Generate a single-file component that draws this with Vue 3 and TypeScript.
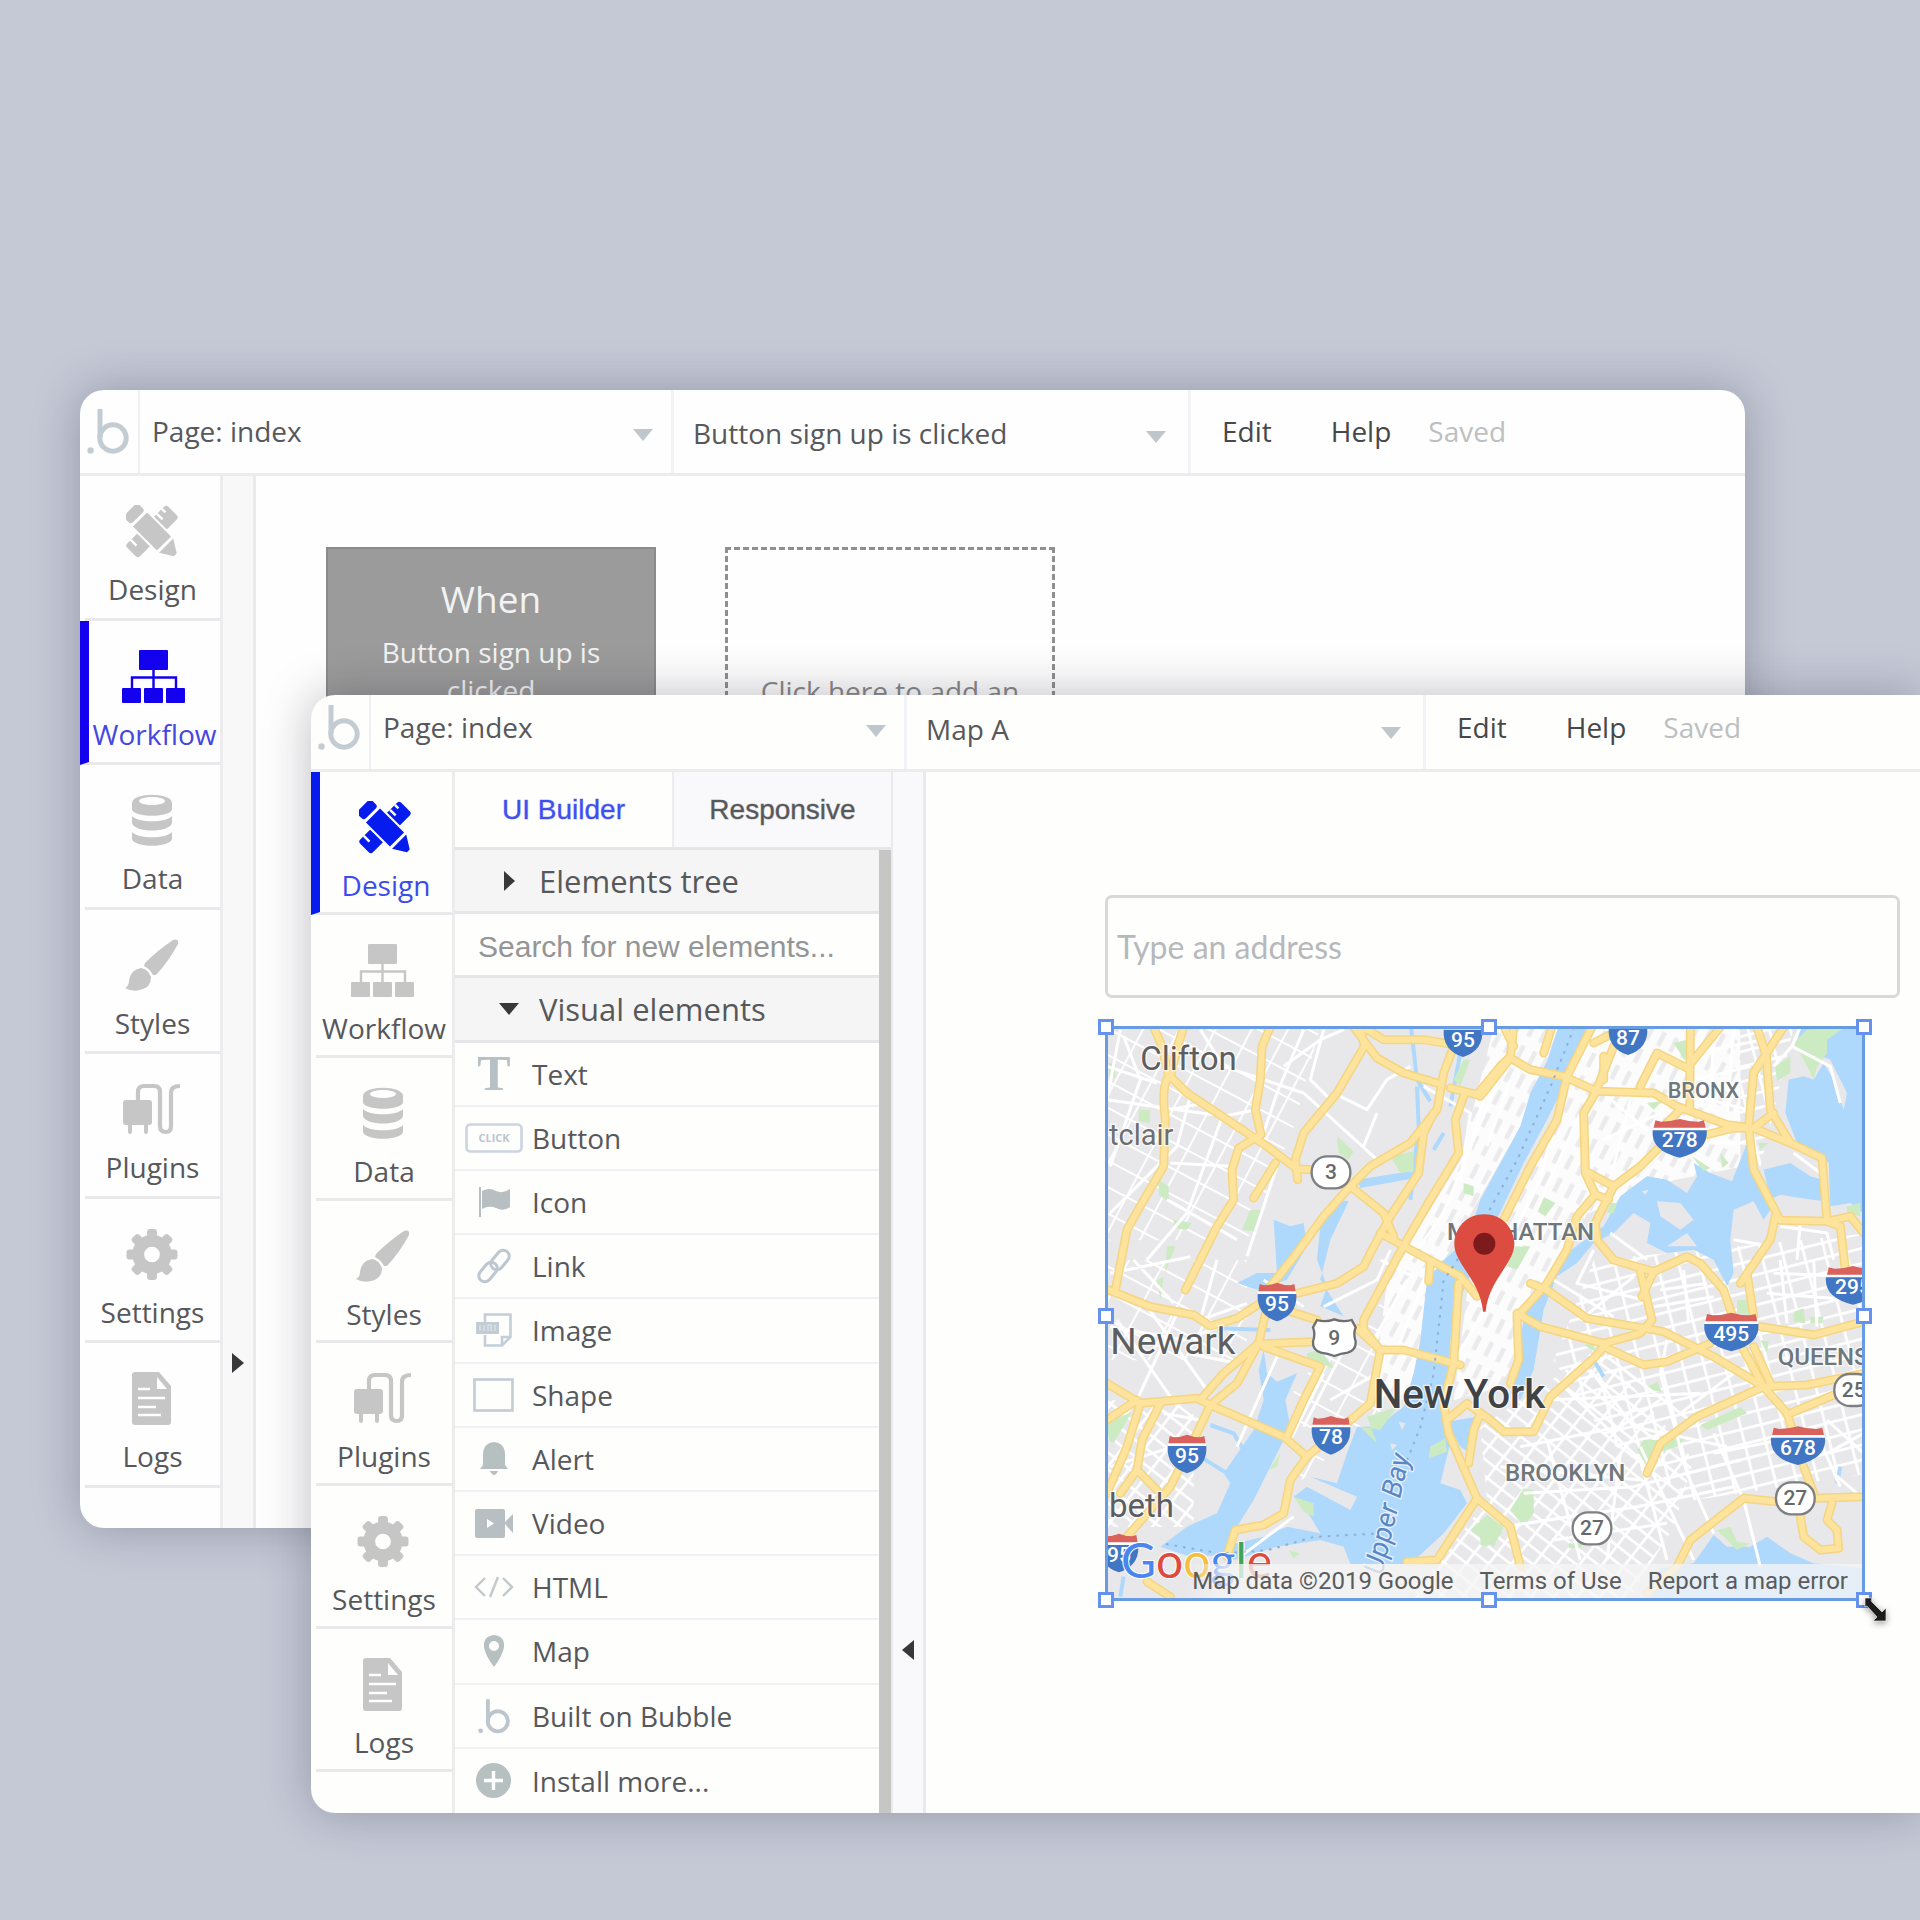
<script setup lang="ts">
import { ref } from 'vue'

type IconName = 'design' | 'workflow' | 'data' | 'styles' | 'plugins' | 'settings' | 'logs'
interface NavItem { label: string; icon: IconName }
interface Shield { x: number; y: number; n: string; wide?: boolean; flat?: boolean }

const navItems: NavItem[] = [
  { label: 'Design', icon: 'design' },
  { label: 'Workflow', icon: 'workflow' },
  { label: 'Data', icon: 'data' },
  { label: 'Styles', icon: 'styles' },
  { label: 'Plugins', icon: 'plugins' },
  { label: 'Settings', icon: 'settings' },
  { label: 'Logs', icon: 'logs' },
]
const elements: string[] = ['Text', 'Button', 'Icon', 'Link', 'Image', 'Shape', 'Alert', 'Video', 'HTML', 'Map', 'Built on Bubble', 'Install more...']
const teeth = [0, 45, 90, 135, 180, 225, 270, 315]
const handles = ['tl', 'tc', 'tr', 'ml', 'mr', 'bl', 'bc', 'br']
const windows = [
  { id: 'back', active: 'Workflow', target: 'Button sign up is clicked' },
  { id: 'front', active: 'Design', target: 'Map A' },
]
const search = ref('')
const address = ref('')

// The map is drawn on four tiles; each tile has its own origin.
const tiles = {
  nw: 'translate(-50 -442)',
  ne: 'translate(1120 -442)',
  sw: 'translate(-50 639)',
  se: 'translate(1120 639)',
}
type Tile = keyof typeof tiles
interface Shape { t: Tile; d: string }

const water: Shape[] = [
  { t: 'nw', d: 'M1405,438 L1370,545 L1320,640 L1290,740 L1230,850 L1170,960 L1130,1080 L1060,1141 L1010,1201 L990,1381 L970,1481 L940,1581 L860,1641 L800,1641 L770,1721 L740,1811 L660,1791 L800,1851 L780,1891 L650,1821 L610,1851 L660,1911 L690,1961 L590,1941 L520,1971 L400,2000 L430,2041 L560,2001 L690,1981 L760,2001 L780,2053 L960,2053 L1060,1961 L1130,1871 L1110,1831 L1050,1811 L1080,1690 L1060,1601 L1075,1481 L1080,1381 L1120,1231 L1180,1101 L1300,850 L1370,720 L1430,600 L1495,438Z' },
  { t: 'sw', d: 'M520,330 L505,390 L520,480 L490,570 L400,700 L420,730 L380,820 L290,860 L210,920 L300,950 L410,945 L440,860 L490,780 L550,660 L600,560 L585,480 L620,400 L560,425 L530,400Z' },
  { t: 'nw', d: 'M745,960 L690,1040 L680,1140 L710,1220 L690,1280 L760,1310 L690,1200 L720,1080 L775,965Z M550,1020 L600,1040 L640,1030 L650,1100 L590,1200 L500,1230 L440,1210 L500,1180 L560,1180Z M800,900 L960,875 L975,895 L810,925Z' },
  { t: 'ne', d: 'M960,438 L1160,438 L1160,1010 L1110,970 L1050,980 L1045,850 L950,790 L915,700 L925,600 L970,590 L1000,600 L1030,550 L1060,600 L1090,690 L1100,640 L1050,540 L950,500Z' },
  { t: 'ne', d: 'M850,870 L930,850 L990,890 L1025,900 L1030,965 L960,955 L900,945 L870,960Z' },
  { t: 'ne', d: 'M640,850 L690,880 L755,905 L800,790 L830,900 L870,990 L850,1020 L820,965 L760,990 L750,1080 L760,1180 L740,1220 L700,1140 L640,1110 L560,1120 L500,1090 L510,1030 L460,1000 L400,1060 L340,1090 L290,1150 L230,1190 L190,1290 L160,1470 L120,1560 L90,1540 L120,1400 L130,1300 L200,1220 L260,1120 L370,1040 L420,950 L500,890 L560,900 L620,940 L650,890Z' },
  { t: 'se', d: 'M700,885 L740,920 L810,920 L860,890 L930,940 L1000,970 L1160,985 L1160,1090 L490,1090 L540,985 L640,970Z' },
  { t: 'sw', d: 'M1070,545 L1160,530 L1140,640 L1110,620Z' },
]
const creeks: Shape[] = [
  { t: 'nw', d: 'M962,442 L980,600 L1020,665 M980,620 L985,740 L960,960 M1110,520 L1080,680 M1060,760 L1030,810' },
  { t: 'sw', d: 'M360,555 L430,580 L460,630 M330,650 L410,700 M380,265 L540,270 M100,1010 L90,1070' },
  { t: 'se', d: 'M340,360 L370,410 M1080,680 L1070,730' },
]
const islands: Shape[] = [
  { t: 'ne', d: 'M530,965 L600,970 L640,1020 L600,1050 L540,1010Z M560,1100 L620,1060 L650,1100Z M485,935 L505,930 L495,945Z' },
  { t: 'sw', d: 'M645,30 L680,80 L665,120 L640,70Z M925,545 L945,550 L935,570Z M900,610 L920,615 L905,630Z' },
]
const parks: Shape[] = [
  { t: 'nw', d: 'M55,550 L75,550 L75,595 L55,590Z M145,690 L180,690 L178,730 L145,725Z M205,900 L235,920 L235,965 L205,945Z M740,770 L790,815 L775,840 L745,820Z M900,830 L970,815 L970,875 L930,880Z M480,990 L515,990 L490,1055 L455,1050Z M250,1020 L305,1030 L290,1050 L250,1045Z M1120,540 L1140,540 L1110,620 L1090,600Z M1120,910 L1150,920 L1150,950 L1120,940Z M230,1100 L255,1100 L225,1180Z' },
  { t: 'ne', d: 'M940,490 L980,450 L1090,445 L1040,480 L1040,520 L1010,560 L1000,600 L970,540Z M885,560 L930,530 L930,580 L890,605Z M580,490 L620,480 L615,545Z M185,950 L225,970 L195,1010 L165,990Z M500,670 L545,665 L520,690Z M635,830 L690,865 L670,875Z M720,820 L745,850 L725,865Z M1100,980 L1140,970 L1140,1010 L1100,1000Z M105,1100 L150,1100 L110,1170 L80,1160Z M835,790 L865,790 L840,810Z M390,970 L410,970 L400,1000 L380,1000Z' },
  { t: 'sw', d: 'M830,530 L920,500 L870,570 L810,560 L860,610Z M1020,620 L1065,595 L1070,635 L1015,655Z M610,770 L670,790 L670,830 L640,815Z M50,550 L125,515 L70,610 L55,600Z M650,340 L690,330 L735,390 L650,350Z M535,690 L570,640 L560,680Z M1140,870 L1190,825 L1240,860 L1210,920Z M595,930 L630,940 L610,955Z M200,120 L220,110 L210,180Z' },
  { t: 'se', d: 'M470,630 L490,600 L540,600 L620,590 L590,620 L530,640 L500,680Z M660,555 L780,500 L800,520 L680,570Z M770,180 L800,180 L805,225 L770,220Z M940,215 L970,205 L975,250 L940,245Z M990,230 L1030,230 L1025,250 L990,250Z M500,440 L530,425 L545,455 L505,450Z M90,810 L130,745 L160,750 L160,820 L130,860Z M0,840 L30,835 L65,880 L20,920 L0,915Z M710,870 L750,860 L770,905 L810,910 L770,930Z M840,300 L865,305 L860,340Z M310,315 L340,310 L345,335Z M265,910 L310,910 L300,925 L265,925Z' },
]
const minor: Shape[] = [
  { t: 'nw', d: 'M50,560 L200,610 M90,450 L50,660 M100,470 L150,600 L60,860 M330,450 L400,560 L640,640 L860,840 M640,450 L560,640 L520,760 M580,560 L690,480 L760,450 M50,660 L400,710 L500,690 M300,650 L260,800 L60,1000 M240,690 L340,670 M400,700 L290,1000 L170,1140 M240,850 L420,860 M230,960 L440,1080 M750,650 L830,690 L890,600 L960,560 M860,700 L820,800 M560,860 L470,1130 M1000,620 L1140,700 L1110,900 M700,450 L660,600 L720,660 M1240,560 L1060,1000 L960,1140' },
  { t: 'ne', d: 'M960,442 L935,500 L880,560 M935,500 L1050,560 L1080,670 M380,650 L560,800 M450,660 L400,860 M370,780 L540,700 M650,600 L810,560 M650,650 L800,690 M700,450 L690,690 M760,450 L740,710 M640,520 L850,480 M690,790 L800,790 M250,610 L180,900 L60,1140 M300,700 L120,1100 M940,820 L1020,880 M900,1040 L1040,1060 L1060,1140 M960,1030 L950,1140 M760,1080 L870,1100 M390,1060 L500,1140 M40,560 L-60,900 M90,600 L20,800' },
  { t: 'sw', d: 'M60,260 L280,300 L470,230 M80,240 L240,470 M170,200 L350,450 M260,220 L140,480 M380,60 L330,240 L470,190 M130,60 L250,190 M60,100 L300,50 M290,340 L440,370 M520,120 L640,200 M700,200 L860,120 L900,30 M560,350 L440,620 M220,520 L330,540 L300,640 M60,680 L250,620 M610,830 L450,950 M700,400 L600,600 M760,330 L640,560 M860,400 L720,480 M950,120 L850,300 M1010,100 L920,330 M1200,180 L1100,350 M870,60 L970,110' },
  { t: 'se', d: 'M610,90 L625,250 M540,150 L680,130 M520,200 L700,170 M340,30 L290,130 L490,180 M220,120 L400,230 M300,240 L460,110 M560,300 L540,400 L620,700 L700,880 M200,480 L660,460 M250,440 L480,660 L560,960 M330,390 L460,560 L740,620 M380,350 L640,550 M120,620 L420,560 L540,480 M200,600 L300,960 M60,680 L480,720 M130,760 L460,740 L780,660 M70,860 L470,800 L760,740 M220,900 L560,850 M700,580 L790,780 L840,980 M880,100 L1150,110 M860,160 L1130,180 M900,60 L920,250 M1000,60 L1010,260 M600,520 L760,400 M700,640 L900,600 M1040,540 L1150,640 M1040,640 L1150,580 M1060,700 L1130,760 M1000,560 L1080,740 M420,640 L380,960 M480,620 L640,960' },
]
const roads: Shape[] = [
  { t: 'nw', d: 'M190,442 L215,500 L235,590 Q212,620 225,720 L220,860 L155,970 L110,1050 L75,1231' },
  { t: 'nw', d: 'M280,442 L262,500 L240,590 L290,640 L440,740 L530,800 L620,868 L670,870' },
  { t: 'nw', d: 'M540,442 L515,500 L510,600 L495,690 L512,765 L445,805 L425,870 L430,960 L380,1040 L340,1120 L285,1231' },
  { t: 'nw', d: 'M810,442 L822,500 L740,640 L640,760 L615,840 L622,900' },
  { t: 'nw', d: 'M790,442 L860,535 L940,580 L1040,610 M830,450 L880,480 L1000,480 L1090,495' },
  { t: 'nw', d: 'M1090,500 L1060,580 L1040,690 L960,790 L840,860 L780,920 L700,1010 L620,1120 L540,1220' },
  { t: 'nw', d: 'M1030,700 L1000,760 L985,880 L900,1010 L840,1120 L820,1161 L740,1211 L620,1241' },
  { t: 'nw', d: 'M780,920 L880,1000 L910,1070 M870,1060 L960,1110 L1110,1190 L1160,1250 M1020,1150 L1015,1205' },
  { t: 'nw', d: 'M1080,625 L1160,645 L1230,560 L1260,530 M1120,650 L1095,720 L1105,820 L1020,960 L950,1080 L820,1320 L820,1350 L870,1411' },
  { t: 'nw', d: 'M555,850 L490,955' },
  { t: 'sw', d: 'M55,150 L180,200 L310,225 L360,258 L440,235 L510,190' },
  { t: 'sw', d: 'M530,200 L505,310 L400,400 L330,480 M505,310 L440,430 L360,495' },
  { t: 'sw', d: 'M50,430 L150,490 L320,475 L360,495 L580,590 L650,650 L840,490 L870,330' },
  { t: 'sw', d: 'M500,312 L670,305 M520,320 L690,380 L640,480 L590,590' },
  { t: 'sw', d: 'M360,495 L310,600 L240,740 L110,890 M210,490 L155,600 L140,690 L200,750 M150,490 L110,620 L50,760 M140,690 L90,760 M50,540 L140,480' },
  { t: 'sw', d: 'M650,650 L600,720 L580,820 L520,855 L435,870 L410,950' },
  { t: 'sw', d: 'M800,265 L870,330 L940,330 L1110,375 M600,215 L680,240' },
  { t: 'sw', d: 'M1105,130 L1090,370 L1060,490 L1075,580 L1160,775 L1040,960 L950,965 M1160,775 L1260,860 L1290,980' },
  { t: 'sw', d: 'M1170,520 L1150,570 L1135,670 M1070,540 L1130,490 L1200,540 L1240,575 L1330,575 L1380,470 L1510,355 L1540,320' },
  { t: 'sw', d: 'M170,1025 L240,1070' },
  { t: 'ne', d: 'M100,442 L90,535 L150,570 L250,590 L350,635 L520,640 L590,680 L740,735 L820,745 L930,790 L1025,835 L1040,1025 L900,1022 L820,870 L805,740 L820,580 L910,442' },
  { t: 'ne', d: 'M335,442 L260,590 L230,720 L150,860 L70,1020' },
  { t: 'ne', d: 'M400,500 L345,640 L310,700 L315,880 L345,945 L385,960 M370,530 L370,600 M340,490 L400,460' },
  { t: 'ne', d: 'M215,442 L190,520 M90,535 L0,650 M75,450 L100,500' },
  { t: 'ne', d: 'M630,442 L628,690 M720,442 L620,565 L530,520 L480,620 M600,690 L560,730' },
  { t: 'ne', d: 'M830,442 L858,530 L870,690 L930,790 M680,765 L760,745 L820,745 L880,700' },
  { t: 'ne', d: 'M540,800 L480,860 L400,920 L345,1030 L350,1081 L400,1141 L520,1176 L620,1131 L660,1151 L730,1231 L760,1320 M325,880 L400,920' },
  { t: 'ne', d: 'M345,945 L290,1010 L260,1110 L200,1211 L110,1311 L115,1440 L90,1510' },
  { t: 'ne', d: 'M885,1010 L870,1080 L780,1211 M800,1181 L820,1310 M1040,1025 L1080,1040 L1095,1170 M1040,1025 L1110,1010 L1150,1060' },
  { t: 'se', d: 'M150,130 L200,150 L320,235 L550,275 L700,350 L850,440 M520,95 L485,170' },
  { t: 'se', d: 'M110,220 L180,260 L370,310 L480,280 L515,240 L480,95' },
  { t: 'se', d: 'M370,320 L490,375 L560,365 L690,310' },
  { t: 'se', d: 'M790,330 L850,440 L920,520 L940,580 M820,320 L870,430' },
  { t: 'se', d: 'M840,260 L1000,285 L1150,245 M850,440 L980,435 L1150,400 M930,520 L1060,465' },
  { t: 'se', d: 'M850,440 L650,530 L540,610 L500,700' },
  { t: 'se', d: 'M970,680 L1000,760 M500,1060 L590,980 L630,900 L790,775 L890,785 M1000,775 L1150,770 M960,830 L970,890 L1020,930 L1075,925 L1070,870 L1040,840 L1055,790' },
]
const interstates: Shield[] = [
  { x: 1068, y: 36, n: '95', flat: true },
  { x: 1563, y: 30, n: '87', flat: true },
  { x: 1718, y: 338, n: '278', wide: true },
  { x: 510, y: 829, n: '95' },
  { x: 672, y: 1229, n: '78' },
  { x: 240, y: 1285, n: '95' },
  { x: 36, y: 1582, n: '95' },
  { x: 2238, y: 779, n: '295', wide: true },
  { x: 1873, y: 919, n: '495', wide: true },
  { x: 2073, y: 1260, n: '678', wide: true },
]
const routes: Shield[] = [
  { x: 672, y: 436, n: '3' },
  { x: 2065, y: 1414, n: '27' },
  { x: 1455, y: 1504, n: '27' },
  { x: 2240, y: 1089, n: '25' },
]
</script>

<template>
  <main class="stage">
    <section v-for="w in windows" :key="w.id" class="window" :class="w.id">
      <header class="topbar">
        <a class="logo" href="#" aria-label="Bubble">
          <svg width="42" height="46" viewBox="0 0 42 46">
            <circle cx="3.5" cy="42.5" r="3.2" fill="#c3ccd3" />
            <path d="M13 1V30" stroke="#c3ccd3" stroke-width="5" fill="none" />
            <circle cx="26" cy="30" r="13.2" stroke="#c3ccd3" stroke-width="5" fill="none" />
          </svg>
        </a>
        <div class="picker page-picker">
          <select :aria-label="w.id + ' page'"><option>Page: index</option></select>
          <svg class="caret" width="20" height="12" viewBox="0 0 20 12"><path d="M0 0H20L10 12Z" fill="#bfc7cd" /></svg>
        </div>
        <div class="picker target-picker">
          <select :aria-label="w.id + ' selection'"><option>{{ w.target }}</option></select>
          <svg class="caret" width="20" height="12" viewBox="0 0 20 12"><path d="M0 0H20L10 12Z" fill="#bfc7cd" /></svg>
        </div>
        <div class="menu">
          <button type="button" class="edit">Edit</button>
          <button type="button" class="help">Help</button>
          <span class="saved">Saved</span>
        </div>
      </header>

      <div class="body">
        <nav class="side">
          <div class="side-grid">
            <a v-for="item in navItems" :key="item.label" href="#" class="side-item" :class="{ active: item.label === w.active }">
              <svg v-if="item.icon === 'design'" class="ico" width="52" height="53" viewBox="0 0 52 52" fill="currentColor">
                <g transform="rotate(-45 26 26)">
                  <rect x="-3" y="17" width="58" height="18" rx="3" />
                  <path d="M5 17V25M42 17V25M49 17V22" stroke="#fff" stroke-width="2.5" />
                </g>
                <g transform="rotate(45 26 26)">
                  <rect x="4" y="14" width="40" height="24" fill="#fff" />
                  <rect x="-5" y="16" width="11" height="20" rx="3" />
                  <rect x="9" y="16" width="34" height="20" />
                  <path d="M46 16L59 24V28L46 36Z" />
                </g>
              </svg>
              <svg v-else-if="item.icon === 'workflow'" class="ico" width="64" height="53" viewBox="0 0 64 53" fill="currentColor">
                <rect x="17" y="0" width="29" height="20" rx="1" />
                <path d="M31.500 20V38M10 38V27.500H54V38" fill="none" stroke="currentColor" stroke-width="2.400" />
                <rect x="0" y="38" width="19" height="15" rx="1" /><rect x="22" y="38" width="19" height="15" rx="1" /><rect x="44" y="38" width="19" height="15" rx="1" />
              </svg>
              <svg v-else-if="item.icon === 'data'" class="ico" width="40" height="53" viewBox="0 0 40 53" fill="currentColor">
                <path d="M0 9C0-2 40-2 40 9V15C40 24 0 24 0 15Z" />
                <ellipse cx="20" cy="7" rx="13" ry="4" fill="#fff" />
                <path d="M0 22C6 29 34 29 40 22V29C38 39 2 39 0 29Z" />
                <path d="M0 38C6 45 34 45 40 38V45C38 54 2 54 0 45Z" />
              </svg>
              <svg v-else-if="item.icon === 'styles'" class="ico" width="54" height="53" viewBox="0 0 54 53" fill="currentColor">
                <path d="M48 1Q54-1 53 5Q44 22 31 36L28 36Q25 30 19 27L20 24Q33 11 48 1Z" />
                <path d="M16 29Q23 30 26 38Q26 49 15 51Q7 53 0 49Q4 47 4 42Q5 31 16 29Z" />
              </svg>
              <svg v-else-if="item.icon === 'plugins'" class="ico" width="58" height="53" viewBox="0 0 58 53" fill="currentColor">
                <rect x="0" y="17" width="29" height="25" rx="3" />
                <path d="M7 40V49M23 40V49" stroke="currentColor" stroke-width="4" stroke-linecap="round" />
                <path d="M15 18V9Q15 3 21 3H31Q37 3 37 9V43Q37 49 43 49Q48 49 48 43V10Q48 3 57 3" fill="none" stroke="currentColor" stroke-width="4.200" />
              </svg>
              <svg v-else-if="item.icon === 'settings'" class="ico" width="54" height="53" viewBox="-27 -27 54 54" fill="currentColor">
                <circle r="14" fill="none" stroke="currentColor" stroke-width="12" />
                <rect v-for="a in teeth" :key="a" x="-5" y="-26" width="10" height="12" rx="3" :transform="`rotate(${a})`" />
              </svg>
              <svg v-else class="ico" width="40" height="53" viewBox="0 0 40 53" fill="currentColor">
                <path d="M3 0H27L39 14V50Q39 53 36 53H3Q0 53 0 50V3Q0 0 3 0Z" />
                <path d="M25 5L35 17H25Z" fill="#fff" />
                <path d="M6 17H18M6 26H33M6 35H24M6 43H29" stroke="#fff" stroke-width="2.600" />
              </svg>
              <span>{{ item.label }}</span>
            </a>
          </div>
        </nav>

        <template v-if="w.id === 'back'">
          <div class="strip">
            <button type="button" class="fold" aria-label="Expand"><svg width="12" height="20" viewBox="0 0 12 20"><path d="M0 0L12 10L0 20Z" fill="#38383a" /></svg></button>
          </div>
          <div class="flow">
            <article class="when">
              <h2>When</h2>
              <p>Button sign up is clicked</p>
            </article>
            <button type="button" class="add">Click here to add an</button>
          </div>
        </template>

        <template v-else>
          <aside class="panel">
            <div class="tabs">
              <button type="button" class="tab on">UI Builder</button>
              <button type="button" class="tab">Responsive</button>
            </div>
            <div class="scroller">
              <div class="rows">
                <button type="button" class="row group">
                  <span class="arrow"><svg width="12" height="20" viewBox="0 0 12 20"><path d="M1 0L12 10L1 20Z" fill="#38383a" /></svg></span>Elements tree
                </button>
                <input v-model="search" class="row search" type="text" placeholder="Search for new elements..." aria-label="Search for new elements">
                <button type="button" class="row group">
                  <span class="arrow"><svg width="20" height="12" viewBox="0 0 20 12"><path d="M0 0H20L10 12Z" fill="#38383a" /></svg></span>Visual elements
                </button>
                <button v-for="el in elements" :key="el" type="button" class="row">
                  <span class="glyph">
                    <svg v-if="el === 'Text'" width="34" height="36" viewBox="0 0 34 36"><text x="17" y="34" text-anchor="middle" font-family="Liberation Serif, serif" font-weight="700" font-size="50" fill="#b7c0c5">T</text></svg>
                    <svg v-else-if="el === 'Button'" width="58" height="30" viewBox="0 0 58 30"><rect x="1.500" y="1.500" width="55" height="27" rx="4" fill="none" stroke="#ccd4e0" stroke-width="2.600" /><text x="29" y="19" text-anchor="middle" font-family="Open Sans, sans-serif" font-weight="700" font-size="11" fill="#bcc5cd">CLICK</text></svg>
                    <svg v-else-if="el === 'Icon'" width="32" height="30" viewBox="0 0 32 30" fill="#b7bfc2"><path d="M1 0H3V30H1Z" /><path d="M4 4Q11 0 18 4Q25 7 32 2V20Q25 25 18 21Q11 18 4 22Z" /></svg>
                    <svg v-else-if="el === 'Link'" width="34" height="36" viewBox="0 0 34 36" fill="none" stroke="#bcc7cf" stroke-width="3"><rect x="-11" y="-6" width="22" height="12" rx="6" transform="translate(11 24) rotate(-50)" /><rect x="-11" y="-6" width="22" height="12" rx="6" transform="translate(23 12) rotate(-50)" /></svg>
                    <svg v-else-if="el === 'Image'" width="36" height="34" viewBox="0 0 36 34"><path d="M9 9V1.500H34.500V24L26 32.500H9V22M26 32V24H34" fill="none" stroke="#c3ced8" stroke-width="2.600" /><rect x="0" y="9" width="23" height="12" fill="#c3ccd4" /><path d="M4 12V18M8 12V18M12 18V12H15V18M19 12V18" stroke="#d8dfe4" stroke-width="1.500" fill="none" /></svg>
                    <svg v-else-if="el === 'Shape'" width="41" height="34" viewBox="0 0 41 34"><rect x="1.500" y="1.500" width="38" height="31" fill="none" stroke="#c3ccd3" stroke-width="2.600" /></svg>
                    <svg v-else-if="el === 'Alert'" width="28" height="33" viewBox="0 0 28 33" fill="#b7c0c1"><path d="M14 0Q25 1 25 13V23L28 27H0L3 23V13Q3 1 14 0Z" /><path d="M10 29H18Q16 33 14 33Q12 33 10 29Z" /></svg>
                    <svg v-else-if="el === 'Video'" width="38" height="29" viewBox="0 0 38 29" fill="#b7bfc2"><rect width="30" height="29" rx="2" /><path d="M29 14L38 5V24Z" /><path d="M12 10L19 14.500L12 19Z" fill="#fff" /></svg>
                    <svg v-else-if="el === 'HTML'" width="40" height="22" viewBox="0 0 40 22" fill="none" stroke="#c3c8cc" stroke-width="2.400"><path d="M11 2L2 11L11 20M29 2L38 11L29 20M24 1L16 21" /></svg>
                    <svg v-else-if="el === 'Map'" width="22" height="32" viewBox="0 0 22 32"><path fill-rule="evenodd" d="M11 0Q22 1 21 12Q20 20 11 32Q2 20 1 12Q0 1 11 0ZM11 6A5 5 0 1 0 11 16A5 5 0 1 0 11 6Z" fill="#b7c0c1" /></svg>
                    <svg v-else-if="el === 'Built on Bubble'" width="32" height="36" viewBox="0 0 42 46"><circle cx="3.500" cy="42.500" r="3.200" fill="#bcc6cc" /><path d="M13 1V30" stroke="#bcc6cc" stroke-width="5" /><circle cx="26" cy="30" r="13.200" stroke="#bcc6cc" stroke-width="5" fill="none" /></svg>
                    <svg v-else width="35" height="35" viewBox="0 0 35 35"><circle cx="17.500" cy="17.500" r="17.500" fill="#b7c0c1" /><path d="M17.500 8V27M8 17.500H27" stroke="#fff" stroke-width="3.400" /></svg>
                  </span>{{ el }}
                </button>
              </div>
              <div class="thumb"></div>
            </div>
          </aside>
          <div class="strip">
            <button type="button" class="fold" aria-label="Collapse"><svg width="12" height="20" viewBox="0 0 12 20"><path d="M12 0L0 10L12 20Z" fill="#38383a" /></svg></button>
          </div>
          <div class="canvas">
            <input v-model="address" class="address" type="text" placeholder="Type an address" aria-label="Address">
            <div class="map">
              <svg class="map-art" viewBox="-6 -3 2280 1725" preserveAspectRatio="xMidYMid slice" role="img" aria-label="Map of New York">
                <defs>
                  <pattern id="gridA" width="96" height="70" patternUnits="userSpaceOnUse" patternTransform="rotate(28)"><path d="M0 0H96M0 0V70" stroke="#fff" stroke-width="11" /></pattern>
                  <pattern id="gridB" width="40" height="76" patternUnits="userSpaceOnUse" patternTransform="rotate(27)"><rect width="40" height="76" fill="#fcfcfc" /><rect x="12" y="14" width="14" height="46" fill="#ebebee" /></pattern>
                  <pattern id="gridC" width="62" height="44" patternUnits="userSpaceOnUse" patternTransform="rotate(-14)"><path d="M0 0H62M0 0V44" stroke="#fff" stroke-width="16" /></pattern>
                  <pattern id="gridD" width="54" height="40" patternUnits="userSpaceOnUse" patternTransform="rotate(38)"><path d="M0 0H54M0 0V40" stroke="#fff" stroke-width="16" /></pattern>
                </defs>
                <rect x="-6" y="-3" width="2280" height="1725" fill="#e8e8eb" />
                <path d="M0 0H640L560 300L420 640H0Z M60 700H420V1000H0V700Z M560 1080L740 900L900 760L880 1100L560 1380Z" fill="url(#gridA)" />
                <path d="M1160 0H1360L1240 300L1000 720L900 1120L800 1100L840 760L1060 400Z M1440 0H1900V420L1700 460L1440 560L1340 760L1180 1080L1040 1120L1080 800L1300 380Z" fill="url(#gridB)" />
                <path d="M1900 0H2060L1960 420L1900 340Z M1460 700L2280 620V1340L1760 1420L1500 1240L1340 1000Z" fill="url(#gridC)" />
                <path d="M1120 1200L1480 960L1760 1300L1700 1500L1560 1725H900L1140 1420Z M-6 1120H260V1500H-6Z" fill="url(#gridD)" />
                <g fill="#aed8fc"><path v-for="(s, i) in water" :key="i" :d="s.d" :transform="tiles[s.t]" /></g>
                <g fill="none" stroke="#aed8fc" stroke-width="12"><path v-for="(s, i) in creeks" :key="i" :d="s.d" :transform="tiles[s.t]" /></g>
                <g fill="#e8e8eb"><path v-for="(s, i) in islands" :key="i" :d="s.d" :transform="tiles[s.t]" /></g>
                <g fill="#cdebc2"><path v-for="(s, i) in parks" :key="i" :d="s.d" :transform="tiles[s.t]" /></g>
                <g fill="none" stroke="#fff" stroke-width="9" stroke-linejoin="round"><path v-for="(s, i) in minor" :key="i" :d="s.d" :transform="tiles[s.t]" /></g>
                <g fill="none" stroke="#f4d582" stroke-width="27" stroke-linejoin="round" stroke-linecap="round"><path v-for="(s, i) in roads" :key="i" :d="s.d" :transform="tiles[s.t]" /></g>
                <g fill="none" stroke="#fde39b" stroke-width="18" stroke-linejoin="round" stroke-linecap="round"><path v-for="(s, i) in roads" :key="i" :d="s.d" :transform="tiles[s.t]" /></g>
                <path d="M1402 0L1330 180L1230 400L1130 580L1010 760L980 1040L940 1200L900 1300M800 1520L620 1530L480 1570L340 1580L170 1550" fill="none" stroke="#8fb0d4" stroke-width="6" stroke-dasharray="8 18" />

                <g v-for="(s, i) in interstates" :key="'i' + i" :transform="`translate(${s.x} ${s.y})`">
                  <g :transform="s.wide ? 'scale(1.4 1)' : undefined">
                    <path v-if="!s.flat" d="M-52-58L-40-54Q-20-54 0-62Q20-54 40-54L52-58L56-34H-56Z" fill="#d9625c" />
                    <path d="M-57-36H57V-28H-57Z" fill="#fff" />
                    <path d="M-58-28H58Q62 34 0 54Q-62 34-58-28Z" fill="#4076c4" />
                  </g>
                  <text y="23" text-anchor="middle" class="num">{{ s.n }}</text>
                </g>
                <g v-for="(s, i) in routes" :key="'r' + i" :transform="`translate(${s.x} ${s.y})`">
                  <rect x="-58" y="-48" width="116" height="96" rx="46" fill="#fff" stroke="#7d7f82" stroke-width="7" />
                  <text y="20" text-anchor="middle" class="num dark">{{ s.n }}</text>
                </g>
                <g transform="translate(682 931)">
                  <path d="M-52-52Q-26-44 0-54Q26-44 52-52L64-30Q56-10 64 12Q66 38 40 46Q20 48 0 56Q-20 48-40 46Q-66 38-64 12Q-56-10-64-30Z" fill="#fff" stroke="#6d6f72" stroke-width="7" />
                  <text y="22" text-anchor="middle" class="num dark">9</text>
                </g>

                <g class="place">
                  <text x="100" y="129" font-size="99">Clifton</text>
                  <text x="6" y="353" font-size="87" fill="#6c6e70">tclair</text>
                  <text x="10" y="982" font-size="111">Newark</text>
                  <text x="6" y="1469" font-size="99">beth</text>
                  <text x="800" y="1144" font-size="121" font-weight="500" fill="#404244">New York</text>
                  <g font-size="72" font-weight="500" fill="#6f767c">
                    <text x="1020" y="638">MANHATTAN</text>
                    <text x="1682" y="213" font-size="65">BRONX</text>
                    <text x="2012" y="1014">QUEENS</text>
                    <text x="1194" y="1361">BROOKLYN</text>
                  </g>
                  <text transform="translate(826 1646) rotate(-77)" font-size="84" font-style="italic" fill="#5c87c6">Upper Bay</text>
                </g>
                <text x="42" y="1652" font-family="Lato, sans-serif" font-size="144" stroke="#fff" stroke-width="6" paint-order="stroke"><tspan fill="#4a86ee">G</tspan><tspan fill="#dc4b3e">o</tspan><tspan fill="#f4bd3c">o</tspan><tspan fill="#4a86ee">g</tspan><tspan fill="#3fa45b">l</tspan><tspan fill="#dc4b3e">e</tspan></text>
                <path d="M1132 562C1184 562 1222 602 1222 652C1222 710 1144 760 1136 854H1128C1120 760 1042 710 1042 652C1042 602 1080 562 1132 562Z" fill="#dc4c40" />
                <circle cx="1132" cy="650" r="33" fill="#7c1a1c" />
              </svg>
              <footer class="legal">
                <span>Map data ©2019 Google</span>
                <a href="#">Terms of Use</a>
                <a href="#">Report a map error</a>
              </footer>
              <i v-for="h in handles" :key="h" class="handle" :class="h"></i>
              <svg class="cursor" width="28" height="28" viewBox="0 0 28 28"><path d="M2 2H9L8 5L19 16L23 12V25H10L14 21L4 10L2 11Z" fill="#1c1c1c" stroke="#fff" stroke-opacity=".6" stroke-width="1" /></svg>
            </div>
          </div>
        </template>
      </div>
    </section>
  </main>
</template>

<style>
body { margin: 0; background: #c5c9d6; }
</style>

<style scoped>
.stage {
  position: relative;
  min-height: 1920px;
  overflow: hidden;
  background: #c5c9d6;
  font-family: 'Open Sans', 'Noto Sans', sans-serif;
  font-size: 28px;
  line-height: 38px;
  color: #56585b;
}
.stage * { box-sizing: border-box; }
button, select, input { font: inherit; color: inherit; background: none; border: 0; padding: 0; margin: 0; border-radius: 0; }
a { color: inherit; text-decoration: none; }
svg { display: block; flex: none; }

.window {
  position: absolute;
  display: flex;
  flex-direction: column;
  border-radius: 24px;
  overflow: hidden;
  background: #fefefe;
  box-shadow: 0 0 48px rgba(20, 20, 40, 0.28);
}
.back { top: 390px; left: 80px; right: 175px; }
.front { top: 695px; left: 311px; right: 0; border-radius: 24px 0 0 24px; background: #fefefd; }

.topbar { display: flex; height: 86px; border-bottom: 3px solid #ececec; }
.front .topbar { height: 77px; }
.topbar > * { display: flex; align-items: center; padding-bottom: 2px; }
.front .topbar > * { padding-bottom: 10px; }
.logo { width: 60px; padding-left: 7px; border-right: 2px solid #eff0f4; }
.picker { position: relative; border-right: 3px solid #f2f3f6; }
.page-picker { width: 534px; }
.target-picker { width: 517px; padding-top: 4px; }
.front .page-picker { width: 536px; }
.front .target-picker { width: 519px; }
.picker select { appearance: none; flex: 1; height: 40px; padding-left: 12px; }
.target-picker select { padding-left: 19px; }
.picker .caret { margin: 8px 18px 0 0; }
.target-picker .caret { margin-right: 22px; }
.menu { padding-left: 31px; color: #46484a; }
.help { margin: 0 37px 0 59px; }
.saved { color: #bdbfc1; }

.body { display: flex; flex: 1; }
.side { width: 143px; border-right: 3px solid #ececee; padding-bottom: 40px; }
.front .side { width: 144px; }
.side-grid { display: grid; grid-template-rows: repeat(7, 1fr); height: 1012px; }
.front .side-grid { height: 1000px; }
.side-item {
  display: flex;
  flex-direction: column;
  align-items: center;
  gap: 12px;
  margin-left: 5px;
  padding-top: 29px;
  border-bottom: 3px solid #e9e9eb;
  white-space: nowrap;
}
.ico { color: #c6c6c6; margin-right: 2px; }
.side-item.active { margin-left: 0; border-left: 9px solid #1200ee; color: #4646e0; }
.active .ico { color: #1200ee; }
.front .side-item.active { border-left-color: #061cee; color: #3c4cec; }
.front .active .ico { color: #061cee; }

.strip {
  display: flex;
  flex-direction: column;
  align-items: center;
  width: 33px;
  background: #f8f8f8;
  border-right: 3px solid #ebebed;
}
.front .strip { width: 35px; background: #f9f9fc; border-right-color: #e9e9f1; border-left: 2px solid #e9e9ee; }
.strip::before { content: ''; flex: 85; }
.strip::after { content: ''; flex: 15; }

.flow { display: flex; align-items: flex-start; gap: 69px; padding: 71px 0 0 70px; }
.when, .add { width: 330px; height: 240px; }
.when { padding: 25px 40px; background: #9b9b9b; border: 2px solid #8b8b8b; color: #f2f2f2; text-align: center; }
.when h2 { margin: 0 0 10px; font-size: 37px; font-weight: 400; line-height: 49px; }
.when p { margin: 0; }
.add { border: 3px dashed #8f8f8f; padding-top: 48px; color: #8a8a8a; white-space: nowrap; }

.panel { display: flex; flex-direction: column; width: 436px; }
.tabs { display: flex; height: 78px; border-bottom: 3px solid #e6e6ea; font-family: 'Liberation Sans', Arial, sans-serif; }
.tab { flex: 1; background: #f9f9fc; -webkit-text-stroke: 1px rgba(86, 88, 91, 0.4); }
.tab.on { background: none; border-right: 2px solid #ececf2; color: #3f4fee; -webkit-text-stroke-color: rgba(63, 79, 238, 0.4); }
.scroller { display: flex; flex: 1; }
.rows { flex: 1; display: grid; grid-template-rows: repeat(15, 1fr); height: 963px; }
.row { display: flex; align-items: center; width: 100%; border-bottom: 2px solid #f0f1f4; text-align: left; }
.row:last-child { border-bottom: 0; }
.group { padding-left: 23px; background: #f5f5f5; border-bottom: 3px solid #e6e6ea; font-size: 31px; }
.arrow { display: flex; justify-content: center; width: 61px; }
.glyph { display: flex; justify-content: center; width: 77px; }
.search { padding: 4px 0 0 23px; border-bottom: 3px solid #e6e6ea; font-family: 'Liberation Sans', Arial, sans-serif; font-size: 30px; }
.search::placeholder { color: #939597; opacity: 1; }
.thumb { width: 12px; background: #c6c6c5; }

.canvas { flex: 1; display: flex; flex-direction: column; align-items: flex-start; gap: 28px; padding: 123px 20px 0 179px; }
.address {
  width: 100%;
  height: 103px;
  padding-left: 9px;
  border: 3px solid #d9d9d9;
  border-radius: 7px;
  font-family: Lato, sans-serif;
  font-size: 32px;
}
.address::placeholder { color: #b7b8bc; opacity: 1; }
.map { position: relative; width: calc(100% - 35px); height: 575px; }
.map::after { content: ''; position: absolute; inset: 0; border: 3px solid #679ce2; pointer-events: none; }
.map-art { width: 100%; height: 100%; }
.legal {
  position: absolute;
  inset: auto 3px 3px 80px;
  display: flex;
  justify-content: flex-end;
  gap: 26px;
  height: 34px;
  padding-right: 14px;
  background: linear-gradient(to right, rgba(245, 245, 245, 0), rgba(245, 245, 245, 0.78) 40px);
  font-family: Roboto, sans-serif;
  font-size: 24px;
  line-height: 34px;
  color: #5a5b5d;
  white-space: nowrap;
}
.handle { position: absolute; z-index: 1; width: 16px; height: 16px; border: 3px solid #6591ef; background: #fff; }
.tl, .tc, .tr { top: -7px; }
.ml, .mr { top: calc(50% - 6px); }
.bl, .bc, .br { bottom: -7px; }
.tl, .ml, .bl { left: -7px; }
.tc, .bc { left: calc(50% - 4px); }
.tr, .mr, .br { right: -7px; }
.cursor { position: absolute; z-index: 2; right: -26px; bottom: -23px; filter: drop-shadow(0 2px 3px rgba(0, 0, 0, 0.4)); }
.place { font-family: Roboto, sans-serif; fill: #5c5e60; stroke: #fff; stroke-width: 8px; stroke-opacity: 0.7; paint-order: stroke; }
.num { font-family: Roboto, sans-serif; font-size: 63px; font-weight: 500; fill: #fff; }
.num.dark { fill: #66686a; }
</style>
